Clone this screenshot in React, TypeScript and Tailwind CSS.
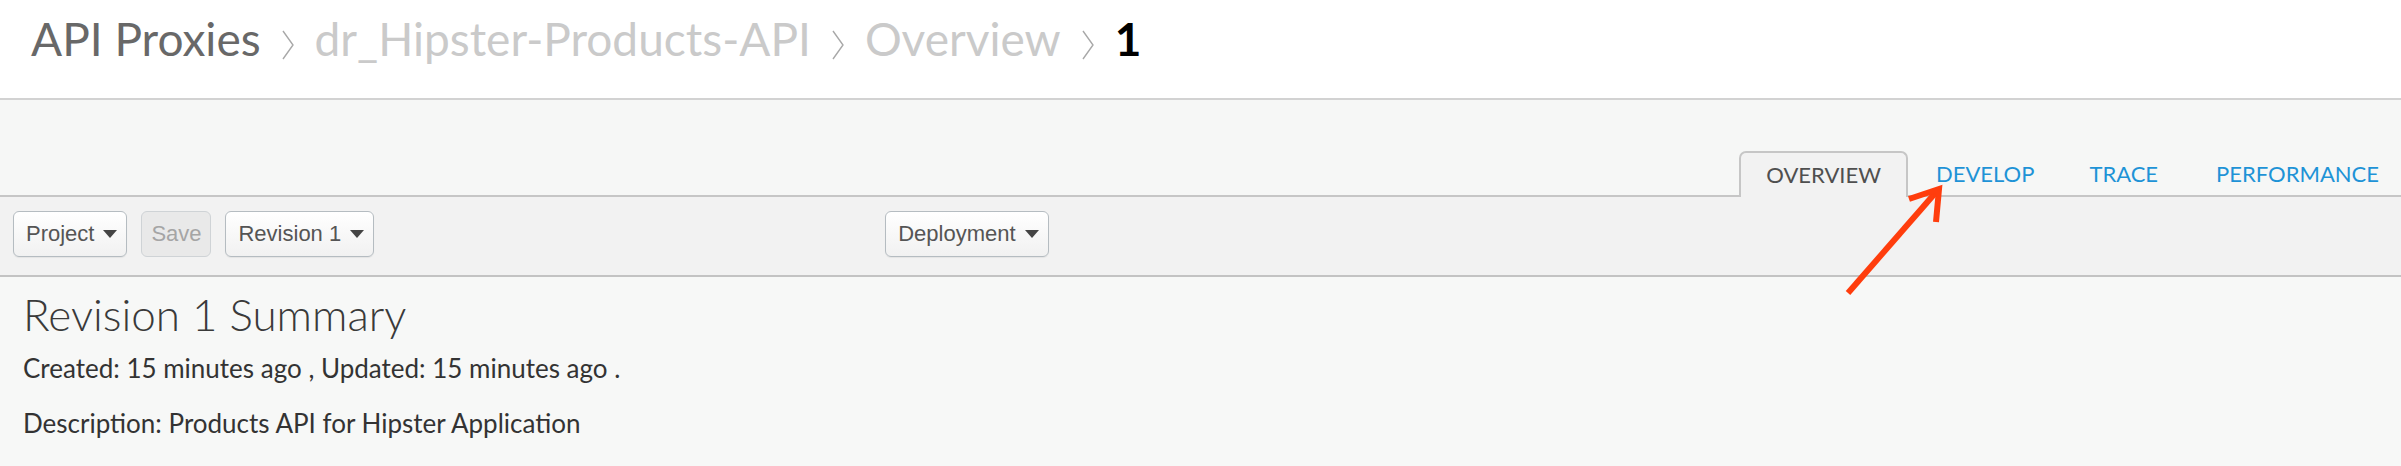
import React from "react";

function Chevron() {
  return (
    <svg width="14" height="30" viewBox="0 0 14 30" className="mx-[20px] mt-[17px] shrink-0">
      <polyline points="2,1 12,15 2,29" fill="none" stroke="#a8a8a8" strokeWidth="1.4" />
    </svg>
  );
}

function Caret() {
  return (
    <span className="inline-block w-0 h-0 border-l-[7px] border-r-[7px] border-t-[8px] border-l-transparent border-r-transparent border-t-[#444] ml-[9px]" />
  );
}

function DropButton({ label }: { label: string }) {
  return (
    <button className="h-[46px] flex items-center pl-[12px] pr-[9px] rounded-[6px] border border-[#b5bcc1] bg-gradient-to-b from-white to-[#f1f1f1] shadow-[0_1px_1px_rgba(0,0,0,0.06)] text-[22px] text-[#555] font-['Liberation_Sans',Arial,sans-serif] leading-none">
      <span>{label}</span>
      <Caret />
    </button>
  );
}

export default function App() {
  return (
    <div className="relative w-full h-[466px] overflow-hidden bg-[#f7f8f7] font-[Lato,sans-serif]">
      {/* Breadcrumb header */}
      <div className="h-[100px] bg-white border-b-2 border-[#d2d2d2] flex items-start pl-[31px] pt-[13px] text-[46px] leading-none">
        <span className="text-[#686868] pt-[3px]">API Proxies</span>
        <Chevron />
        <span className="text-[#cacaca] pt-[3px]">dr_Hipster-Products-API</span>
        <Chevron />
        <span className="text-[#cacaca] pt-[3px]">Overview</span>
        <Chevron />
        <span className="text-black font-bold pt-[3px]">1</span>
      </div>

      {/* Tab strip */}
      <div className="h-[97px] bg-[#f6f7f6] border-b-2 border-[#c6c6c6] flex justify-end items-end">
        <div className="flex items-end gap-[5px] -mb-[2px]">
          <div className="h-[46px] flex items-center px-[25px] bg-[#f2f2f2] border-2 border-b-0 border-[#c6c6c6] rounded-t-[7px] text-[22px] leading-none text-[#4f4f4f]">
            OVERVIEW
          </div>
          <div className="h-[46px] flex items-center pl-[23px] pr-[27px] text-[22px] leading-none text-[#1e93d6]">
            DEVELOP
          </div>
          <div className="h-[46px] flex items-center pl-[23px] pr-[28px] text-[22px] leading-none text-[#1e93d6]">
            TRACE
          </div>
          <div className="h-[46px] flex items-center pl-[25px] pr-[22px] text-[22px] leading-none text-[#1e93d6]">
            PERFORMANCE
          </div>
        </div>
      </div>

      {/* Toolbar */}
      <div className="h-[80px] bg-[#f2f2f2] border-b-2 border-[#c3c3c3] flex items-start pt-[14px] pl-[13px]">
        <div className="flex gap-[14px]">
          <DropButton label="Project" />
          <button className="h-[46px] w-[70px] flex items-center justify-center rounded-[6px] border border-[#cfd3d6] bg-[#e9e9e9] text-[22px] text-[#a5a5a5] font-['Liberation_Sans',Arial,sans-serif] leading-none">
            Save
          </button>
          <DropButton label="Revision 1" />
        </div>
        <div className="ml-[511px]">
          <DropButton label="Deployment" />
        </div>
      </div>

      {/* Content */}
      <div className="pl-[23px] pt-[15px]">
        <h1 className="text-[44px] font-light leading-none text-[#3a3a3a]">Revision 1 Summary</h1>
        <p className="mt-[19px] text-[26px] leading-none text-[#333]">
          Created: 15 minutes ago , Updated: 15 minutes ago .
        </p>
        <p className="mt-[29px] text-[26px] leading-none text-[#333]">
          Description: Products API for Hipster Application
        </p>
      </div>

      {/* Annotation arrow */}
      <svg className="absolute left-0 top-0 pointer-events-none" width="2401" height="466">
        <g stroke="#ff3d0d" strokeWidth="6" fill="none" strokeLinecap="butt" strokeLinejoin="miter">
          <line x1="1848" y1="293" x2="1937" y2="191" />
          <polyline points="1909,199 1939,189 1936,222" />
        </g>
      </svg>
    </div>
  );
}
